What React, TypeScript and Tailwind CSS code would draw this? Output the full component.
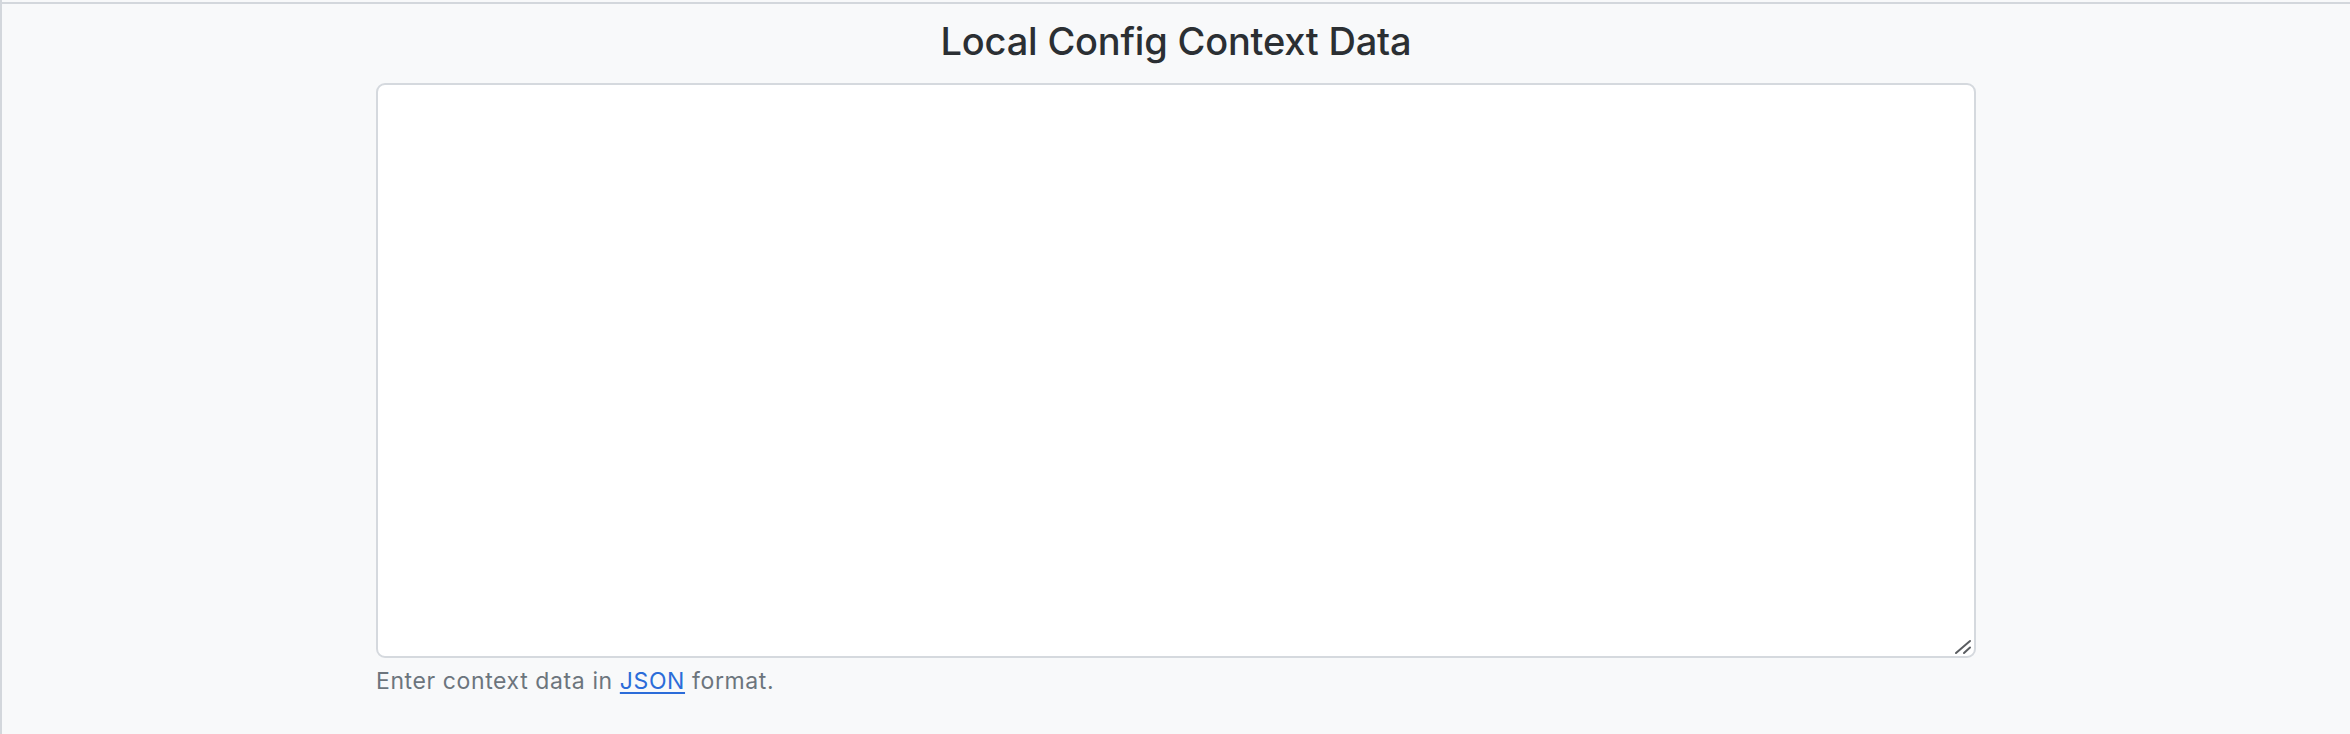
import React from 'react';

export default function App() {
  return (
    <div className="min-h-[734px] bg-[#f8f9fa] border-l-2 border-[#d3d7dc] pt-[2px] font-['Inter',sans-serif]">
      <div className="border-t-2 border-[#d3d7dc]">
        <h3 className="mt-[15px] text-center text-[38px] leading-[1.2] font-medium tracking-[-0.2px] text-[#2b2f33]">
          Local Config Context Data
        </h3>
        <div className="w-[1600px] mx-auto mt-[18px]">
          <div className="relative">
            <textarea
              className="block w-full h-[575px] bg-white border-2 border-[#d5d9de] rounded-[9px] outline-none resize-none"
              defaultValue=""
            />
            {/* resize grip */}
            <svg
              className="absolute right-[4px] bottom-[3px] pointer-events-none"
              width="18"
              height="16"
              viewBox="0 0 18 16"
            >
              <line x1="2" y1="14" x2="16" y2="2" stroke="#5a5d61" strokeWidth="2" strokeLinecap="round" />
              <line x1="10" y1="14" x2="16" y2="8.5" stroke="#5a5d61" strokeWidth="2" strokeLinecap="round" />
            </svg>
          </div>
          <p className="mt-[6px] text-[23px] leading-[1.5] tracking-[0.6px] text-[#6c757d]">
            Enter context data in{' '}
            <a href="#" className="text-[#2b6cd9] underline underline-offset-[3px]">
              JSON
            </a>{' '}
            format.
          </p>
        </div>
      </div>
    </div>
  );
}
